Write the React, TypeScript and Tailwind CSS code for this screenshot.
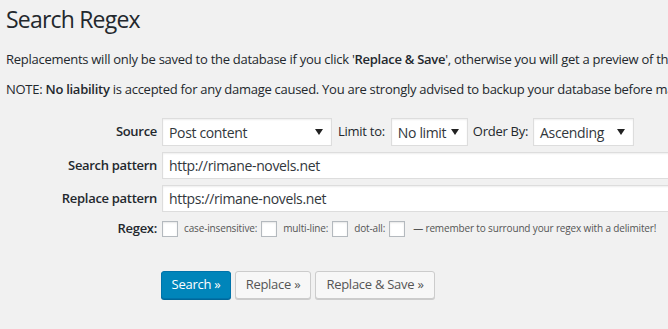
import React from "react";

const FONT = "font-['Segoe_UI','Open_Sans',sans-serif]";

function Arrow() {
  return (
    <svg width="8" height="6" viewBox="0 0 8 6" className="shrink-0">
      <path d="M0 0 L8 0 L4 6 Z" fill="#222" />
    </svg>
  );
}

/** Fake WP select box */
function Select({ value, width }: { value: string; width: string }) {
  return (
    <div
      className={`flex h-[28px] items-center justify-between border border-[#ddd] bg-white pl-[6px] pr-[8px] text-[14px] tracking-[-0.35px] text-[#32373c] shadow-[inset_0_1px_2px_rgba(0,0,0,0.07)] ${width}`}
    >
      <span>{value}</span>
      <Arrow />
    </div>
  );
}

function Checkbox() {
  return (
    <span className="inline-block h-[16px] w-[16px] shrink-0 border border-[#b4b9be] bg-white shadow-[inset_0_1px_2px_rgba(0,0,0,0.1)]" />
  );
}

function Row({ label, children, className = "" }: { label: string; children: React.ReactNode; className?: string }) {
  return (
    <div className={`flex items-center ${className}`}>
      <div className="w-[157px] shrink-0 text-right text-[13px] font-semibold tracking-[-0.3px] text-[#23282d]">{label}</div>
      <div className="ml-[5px] flex flex-1 items-center">{children}</div>
    </div>
  );
}

export default function App() {
  return (
    <div className={`h-[329px] w-[668px] overflow-hidden bg-[#f1f1f1] text-[#23282d] ${FONT}`}>
      <div className="whitespace-nowrap pl-[6px] pt-[5px]">
        <h1 className="text-[23px] font-normal leading-[29px] tracking-[-0.8px]">Search Regex</h1>

        <p className="mt-[17px] text-[13px] leading-[17px] tracking-[-0.27px]">
          Replacements will only be saved to the database if you click '<strong className="font-semibold">Replace &amp; Save</strong>', otherwise you will get a preview of the results.
        </p>
        <p className="mt-[13px] text-[13px] leading-[17px] tracking-[-0.27px]">
          NOTE: <strong className="font-semibold">No liability</strong> is accepted for any damage caused. You are strongly advised to backup your database before making any changes.
        </p>
      </div>

      <div className="mt-[20px] flex flex-col">
        <Row label="Source">
          <Select value="Post content" width="w-[170px]" />
          <span className="ml-[6px] mr-[6px] text-[13px] tracking-[-0.27px]">Limit to:</span>
          <Select value="No limit" width="w-[77px]" />
          <span className="ml-[5px] mr-[5px] text-[13px] tracking-[-0.27px]">Order By:</span>
          <Select value="Ascending" width="w-[101px]" />
        </Row>

        <Row label="Search pattern" className="mt-[6px]">
          <div className="flex h-[27px] w-[540px] shrink-0 items-center border border-[#ddd] bg-white pl-[6px] text-[14px] tracking-[-0.35px] text-[#32373c] shadow-[inset_0_1px_2px_rgba(0,0,0,0.07)]">
            http://rimane-novels.net
          </div>
        </Row>

        <Row label="Replace pattern" className="mt-[6px]">
          <div className="flex h-[27px] w-[540px] shrink-0 items-center border border-[#ddd] bg-white pl-[6px] text-[14px] tracking-[-0.35px] text-[#32373c] shadow-[inset_0_1px_2px_rgba(0,0,0,0.07)]">
            https://rimane-novels.net
          </div>
        </Row>

        <Row label="Regex:" className="mt-[7px]">
          <div className="flex items-center whitespace-nowrap text-[10px] tracking-[-0.15px] text-[#555]">
            <Checkbox />
            <span className="ml-[6px] mr-[4px]">case-insensitive:</span>
            <Checkbox />
            <span className="ml-[6px] mr-[4px]">multi-line:</span>
            <Checkbox />
            <span className="ml-[6px] mr-[4px]">dot-all:</span>
            <Checkbox />
            <span className="ml-[8px]">— remember to surround your regex with a delimiter!</span>
          </div>
        </Row>
      </div>

      <div className="ml-[161px] mt-[32px] flex gap-[4px]">
        <button className="h-[28px] w-[70px] rounded-[3px] border border-[#0073aa] bg-[#0085ba] text-[13px] tracking-[-0.27px] text-white shadow-[0_1px_0_#006799]">
          Search »
        </button>
        <button className="h-[28px] w-[76px] rounded-[3px] border border-[#ccc] bg-[#f7f7f7] text-[13px] tracking-[-0.27px] text-[#555] shadow-[0_1px_0_#ccc]">
          Replace »
        </button>
        <button className="h-[28px] w-[120px] rounded-[3px] border border-[#ccc] bg-[#f7f7f7] text-[13px] tracking-[-0.27px] text-[#555] shadow-[0_1px_0_#ccc]">
          Replace &amp; Save »
        </button>
      </div>
    </div>
  );
}
